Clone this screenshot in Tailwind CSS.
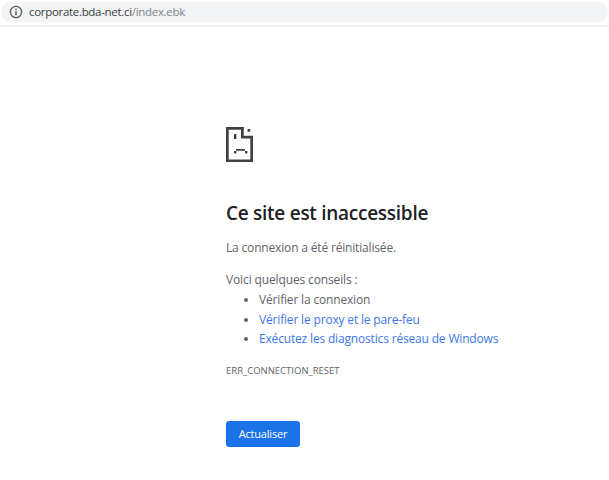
<!DOCTYPE html>
<html lang="fr">
<head>
<meta charset="utf-8">
<title>Ce site est inaccessible</title>
<script src="https://cdn.jsdelivr.net/npm/@tailwindcss/browser@4"></script>
</head>
<body class="bg-white font-['Open_Sans','Noto_Sans',sans-serif] h-[480px] overflow-hidden">
<header class="h-[27px] bg-white border-b-2 border-[#eff0f2] pt-[2px] pl-[1px] pr-[1px]">
  <div class="h-[20px] bg-[#f1f3f4] rounded-[10px] flex items-center pl-[8px] gap-[6px]">
    <svg width="14" height="14" viewBox="0 0 14 14" fill="none" class="shrink-0">
      <circle cx="7" cy="7" r="5.6" stroke="#5f6368" stroke-width="1.4"/>
      <rect x="6.200" y="6.200" width="1.600" height="4" fill="#5f6368"/>
      <rect x="6.200" y="3.600" width="1.600" height="1.600" fill="#5f6368"/>
    </svg>
    <p class="text-[11.500px] leading-[20px] tracking-[-0.31px] text-[#3c4043] whitespace-nowrap">corporate.bda-net.ci<span class="text-[#80868b]">/index.ebk</span></p>
  </div>
</header>
<main class="pl-[226px] pt-[100px]">
  <svg width="28" height="36" viewBox="0 0 28 36" class="block" fill="#404040">
    <path d="M0 0h17.500v2.700H2.700v29.800H24.300V11h2.700v24H0z"/>
    <path d="M15 0h2.700v8.800H27v2.700H15z"/>
    <rect x="21.500" y="2" width="2.700" height="2.700"/>
    <rect x="8" y="7" width="2.400" height="5"/>
    <rect x="10" y="22" width="9" height="1.700"/>
    <rect x="8" y="24" width="2.400" height="2.400"/>
    <rect x="19" y="24" width="2.400" height="2.400"/>
  </svg>
  <h1 class="mt-[37px] text-[19px] leading-[26px] font-semibold tracking-[-0.27px] text-[#202124]">Ce site est inaccessible</h1>
  <p class="mt-[12px] text-[12px] leading-[20px] tracking-[-0.17px] text-[#5f6368]">La connexion a été réinitialisée.</p>
  <p class="mt-[12px] text-[12px] leading-[20px] tracking-[-0.13px] text-[#5f6368]">Voici quelques conseils :</p>
  <ul class="list-disc pl-[33px] text-[12px] leading-[19.500px] tracking-[-0.17px] text-[#5f6368]">
    <li>Vérifier la connexion</li>
    <li><a href="#" class="text-[#3b78e7]">Vérifier le proxy et le pare-feu</a></li>
    <li><a href="#" class="text-[#3b78e7]">Exécutez les diagnostics réseau de Windows</a></li>
  </ul>
  <p class="mt-[15.500px] text-[9.500px] leading-[14px] text-[#5f6368]">ERR_CONNECTION_RESET</p>
  <button class="mt-[43px] block w-[74px] h-[26px] rounded-[3px] bg-[#1a73e8] text-white text-[11px] font-medium tracking-[-0.2px]">Actualiser</button>
</main>
</body>
</html>
